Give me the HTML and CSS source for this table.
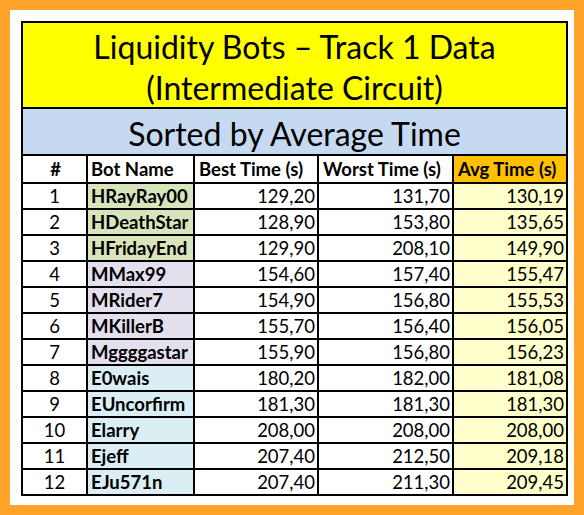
FILE: index.html
```html
<!DOCTYPE html>
<html>
<head>
<meta charset="utf-8">
<link rel="stylesheet" href="styles.css">
</head>
<body>
<div class="frame">
<table class="data">
<colgroup>
<col class="c-num"><col class="c-name"><col class="c-best"><col class="c-worst"><col class="c-avg">
</colgroup>
<tr class="title"><td colspan="5"><div class="title-text">Liquidity Bots – Track 1 Data<br>(Intermediate Circuit)</div></td></tr>
<tr class="subtitle"><td colspan="5">Sorted by Average Time</td></tr>
<tr class="head"><th class="num">#</th><th class="name-h">Bot Name</th><th>Best Time (s)</th><th>Worst Time (s)</th><th class="avg-h">Avg Time (s)</th></tr>
<tr><td class="num">1</td><td class="name h">HRayRay00</td><td class="val">129,20</td><td class="val">131,70</td><td class="val avg">130,19</td></tr>
<tr><td class="num">2</td><td class="name h">HDeathStar</td><td class="val">128,90</td><td class="val">153,80</td><td class="val avg">135,65</td></tr>
<tr><td class="num">3</td><td class="name h">HFridayEnd</td><td class="val">129,90</td><td class="val">208,10</td><td class="val avg">149,90</td></tr>
<tr><td class="num">4</td><td class="name m">MMax99</td><td class="val">154,60</td><td class="val">157,40</td><td class="val avg">155,47</td></tr>
<tr><td class="num">5</td><td class="name m">MRider7</td><td class="val">154,90</td><td class="val">156,80</td><td class="val avg">155,53</td></tr>
<tr><td class="num">6</td><td class="name m">MKillerB</td><td class="val">155,70</td><td class="val">156,40</td><td class="val avg">156,05</td></tr>
<tr><td class="num">7</td><td class="name m">Mggggastar</td><td class="val">155,90</td><td class="val">156,80</td><td class="val avg">156,23</td></tr>
<tr><td class="num">8</td><td class="name e">E0wais</td><td class="val">180,20</td><td class="val">182,00</td><td class="val avg">181,08</td></tr>
<tr><td class="num">9</td><td class="name e">EUncorfirm</td><td class="val">181,30</td><td class="val">181,30</td><td class="val avg">181,30</td></tr>
<tr><td class="num">10</td><td class="name e">Elarry</td><td class="val">208,00</td><td class="val">208,00</td><td class="val avg">208,00</td></tr>
<tr><td class="num">11</td><td class="name e">Ejeff</td><td class="val">207,40</td><td class="val">212,50</td><td class="val avg">209,18</td></tr>
<tr><td class="num">12</td><td class="name e">EJu571n</td><td class="val">207,40</td><td class="val">211,30</td><td class="val avg">209,45</td></tr>
</table>
</div>
</body>
</html>
```

FILE: styles.css
```css
html, body {
  margin: 0;
  padding: 0;
  background: #ffa32a;
}
.frame {
  box-sizing: border-box;
  width: 584px;
  height: 515px;
  border: 10px solid #ffa32a;
  background: #ffffff;
  padding: 11px 8px 9px 11px;
  font-family: Lato, "Liberation Sans", sans-serif;
  color: #000;
}
.data {
  border-collapse: collapse;
  table-layout: fixed;
  width: 545px;
  border: 2px solid #000;
}
.c-num { width: 65px; }
.c-name { width: 107px; }
.c-best { width: 124px; }
.c-worst { width: 135px; }
.c-avg { width: 114px; }
.data td, .data th {
  border: 2px solid #000;
  padding: 0 2px 0 4px;
  white-space: nowrap;
  overflow: hidden;
}
.title td {
  background: #ffff00;
  height: 84px;
  text-align: center;
  font-size: 32px;
  padding: 0;
}
.title-text {
  box-sizing: border-box;
  height: 84px;
  padding-top: 3px;
  line-height: 41px;
}
.subtitle td {
  background: #c5d9f1;
  height: 41px;
  text-align: center;
  font-size: 32px;
  padding: 4px 0 0 0;
}
.head th {
  height: 26px;
  font-size: 18.5px;
  font-weight: bold;
  text-align: left;
  background: #fff;
}
.head th.num { text-align: center; }
.head th.name-h { padding-left: 3px; }
.head th.avg-h { background: #ffc000; }
.data tr:not(.title):not(.subtitle):not(.head) td {
  height: 24px;
  font-size: 18.5px;
}
.data tr td.name {
  font-weight: bold;
  font-size: 16.5px;
  padding-left: 3px;
}
.data tr td.num { padding: 0; text-align: center; }
td.h { background: #d8e4bc; }
td.m { background: #e4dfec; }
td.e { background: #daeef3; }
td.val { text-align: right; }
td.avg { background: #ffffcc; }
```
